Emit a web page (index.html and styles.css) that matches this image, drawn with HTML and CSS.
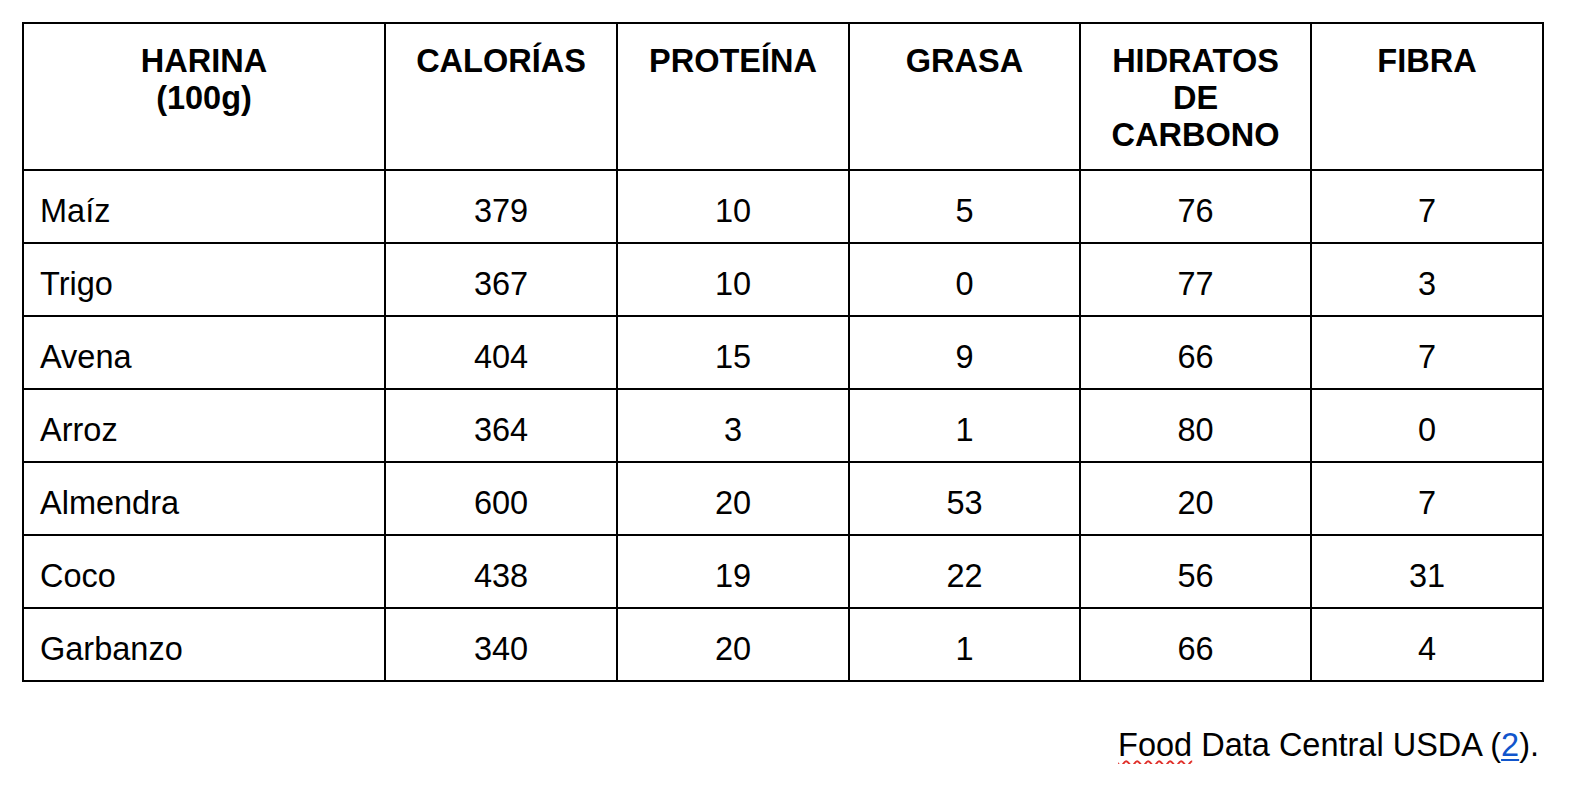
FILE: index.html
```html
<!DOCTYPE html>
<html lang="es">
<head>
<meta charset="utf-8">
<title>Harinas</title>
<link rel="stylesheet" href="styles.css">
</head>
<body>
<div class="page">
  <table class="nutri">
    <thead>
      <tr>
        <th class="c1">HARINA<br>(100g)</th>
        <th class="c2">CALORÍAS</th>
        <th class="c3">PROTEÍNA</th>
        <th class="c4">GRASA</th>
        <th class="c5">HIDRATOS<br>DE<br>CARBONO</th>
        <th class="c6">FIBRA</th>
      </tr>
    </thead>
    <tbody>
      <tr><td class="name">Maíz</td><td>379</td><td>10</td><td>5</td><td>76</td><td>7</td></tr>
      <tr><td class="name">Trigo</td><td>367</td><td>10</td><td>0</td><td>77</td><td>3</td></tr>
      <tr><td class="name">Avena</td><td>404</td><td>15</td><td>9</td><td>66</td><td>7</td></tr>
      <tr><td class="name">Arroz</td><td>364</td><td>3</td><td>1</td><td>80</td><td>0</td></tr>
      <tr><td class="name">Almendra</td><td>600</td><td>20</td><td>53</td><td>20</td><td>7</td></tr>
      <tr><td class="name">Coco</td><td>438</td><td>19</td><td>22</td><td>56</td><td>31</td></tr>
      <tr><td class="name">Garbanzo</td><td>340</td><td>20</td><td>1</td><td>66</td><td>4</td></tr>
    </tbody>
  </table>
  <p class="source"><span class="spell">Food</span> Data Central USDA (<a class="ref" href="#">2</a>).</p>
</div>
</body>
</html>
```
FILE: styles.css
```css
html, body {
  margin: 0;
  padding: 0;
  background: #ffffff;
}

body {
  font-family: "Liberation Sans", Arial, sans-serif;
  color: #000000;
  font-size: 32.5px;
  line-height: 37px;
}

.page {
  padding: 22px 0 0 22px;
  width: 1517px;
}

.nutri {
  table-layout: fixed;
  width: 1522px;
  border-collapse: separate;
  border-spacing: 0;
  border-left: 2px solid #000;
  border-top: 2px solid #000;
}

.nutri th,
.nutri td {
  box-sizing: border-box;
  border-right: 2px solid #000;
  border-bottom: 2px solid #000;
  vertical-align: top;
  text-align: center;
  padding: 0 6px;
}

.nutri th {
  font-weight: bold;
  height: 147px;
  padding-top: 19px;
}

.nutri td {
  font-weight: normal;
  height: 73px;
  padding-top: 22px;
}

.nutri td.name {
  text-align: left;
  padding-left: 16px;
}

.c1 { width: 362px; }
.c2 { width: 232px; }
.c3 { width: 232px; }
.c4 { width: 231px; }
.c5 { width: 231px; }
.c6 { width: 232px; }

.source {
  margin: 45px 0 0 0;
  text-align: right;
}

.spell {
  text-decoration-line: underline;
  text-decoration-style: wavy;
  text-decoration-color: #e0302a;
  text-decoration-thickness: 1.5px;
  text-underline-offset: 4px;
}

.ref {
  color: #1155cc;
  text-decoration: underline;
  text-decoration-thickness: 2px;
  text-underline-offset: 3px;
}
```
